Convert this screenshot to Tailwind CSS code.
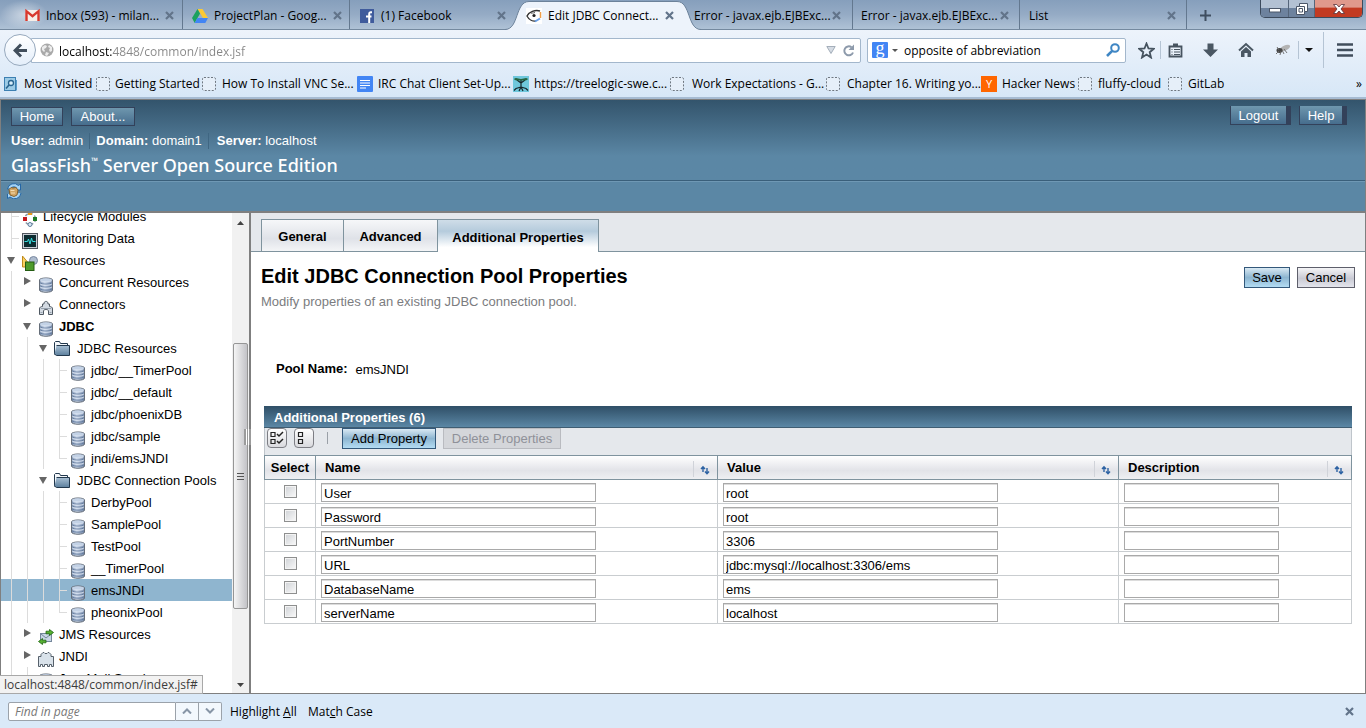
<!DOCTYPE html>
<html lang="en">
<head>
<meta charset="utf-8">
<title>Edit JDBC Connection Pool Properties</title>
<script src="https://cdn.jsdelivr.net/npm/@tailwindcss/browser@4"></script>
</head>
<body class="h-screen flex flex-col overflow-hidden bg-[#dae9f8] text-black font-['Open_Sans','Noto_Sans',sans-serif] text-[12px] leading-4">

<svg class="absolute size-0" aria-hidden="true">
  <defs>
    <linearGradient id="disk" x1="0" x2="1" y1="0" y2="0"><stop offset="0" stop-color="#7f93b1"/><stop offset=".4" stop-color="#cbd8ea"/><stop offset="1" stop-color="#7488a8"/></linearGradient>
    <linearGradient id="fold" x1="0" x2="0" y1="0" y2="1"><stop offset="0" stop-color="#a9c0d4"/><stop offset="1" stop-color="#5c7f9d"/></linearGradient>
    <symbol id="x" viewBox="0 0 9 9"><path d="M1 1l7 7M8 1l-7 7" stroke="#62748a" stroke-width="2.2"/></symbol>
    <symbol id="blank" viewBox="0 0 14 14"><rect x=".5" y=".5" width="13" height="13" rx="1.5" fill="#e6eff9" stroke="#6f7780" stroke-dasharray="2 1.5"/></symbol>
    <symbol id="db" viewBox="0 0 16 16"><path d="M1.500 3C1.500 .3 14.500 .3 14.500 3V13c0 3-13 3-13 0z" fill="url(#disk)" stroke="#666e79"/><ellipse cx="8" cy="3" rx="6" ry="1.700" fill="#c3d2e6"/><path d="M2 5.800c1 1.800 11 1.800 12 0M2 8.800c1 1.800 11 1.800 12 0M2 11.800c1 1.800 11 1.800 12 0" fill="none" stroke="#5f779b" stroke-width=".9"/><path d="M2 6.800c1 1.800 11 1.800 12 0M2 9.800c1 1.800 11 1.800 12 0M2.500 4c2 1.200 9 1.200 11 0" fill="none" stroke="#dfe9f5" stroke-width=".8"/></symbol>
    <symbol id="folder" viewBox="0 0 16 16"><path d="M.5 14.500V2.500l1-1h4l1 2h7v2" fill="#f4f7fa" stroke="#22384d"/><path d="M2.500 5.500h13v10h-13l-2-1.500" fill="url(#fold)" stroke="#22384d"/></symbol>
    <symbol id="life" viewBox="0 0 16 16"><circle cx="8" cy="8" r="5.500" fill="none" stroke="#8c9aa8" stroke-width="1.500" stroke-dasharray="3 2"/><rect x="1" y="6" width="4" height="4" fill="#c4171e"/><rect x="11" y="6" width="4" height="4" fill="#1d7a27"/><circle cx="8" cy="13.500" r="2" fill="#d8e7f5" stroke="#5e7d9b"/><rect x="6" y="1" width="4" height="3" fill="#e79a1b"/></symbol>
    <symbol id="mon" viewBox="0 0 16 16"><rect x=".5" y=".5" width="15" height="15" fill="#c9ced6" stroke="#50565e"/><rect x="2" y="2" width="12" height="12" fill="#0c2c31"/><path d="M2.500 8.500h3L6.500 6 8 11l1.500-6 1 3.500h3" fill="none" stroke="#35dfe0"/></symbol>
    <symbol id="res" viewBox="0 0 16 16"><path d="M.5 1v11h5V7z" fill="#f9d163" stroke="#c08b1c"/><circle cx="11.500" cy="5.500" r="4" fill="#aebccf" stroke="#7888a0"/><rect x="3.500" y="7" width="8.500" height="8.500" fill="#4e9b2b" stroke="#245c12"/></symbol>
    <symbol id="conn" viewBox="0 0 16 16"><path d="M1.500 15.500v-5.500c0-2 1.500-2.500 3-2.500V5h1.500c-.5-3.500 4.500-3.500 4 0h1.500v2.500c1.500 0 3 .5 3 2.500v5.500h-4v-3.500c0-2-5-2-5 0v3.500z" fill="#d3dae2" stroke="#4f5862"/><path d="M3 9.500h10M2.500 13.500h2M11.500 13.500h2" fill="none" stroke="#98a3af"/></symbol>
    <symbol id="jms" viewBox="0 0 16 16"><rect x="2.500" y="4.500" width="11" height="8" fill="#c8d6e6" stroke="#75879b"/><path d="M3 5l5 4 5-4" fill="none" stroke="#75879b"/><path d="M8 2.200h3.500V.5L15.500 3.500l-4 3V4.800H8zM8 11.200H4.500V9.500L.5 12.500l4 3v-1.700H8z" fill="#55b031" stroke="#1f6412" stroke-width=".8"/></symbol>
    <symbol id="jndi" viewBox="0 0 16 16"><path d="M.5 15.500v-10h2.500v-2l2-2h1l1 1h2l1-1h1l2 2v2h2.500v10h-2v-2h-2v2h-2v-2h-3v2h-2v-2h-2v2z" fill="#d9e2ea" stroke="#56606b"/></symbol>
    <symbol id="sort" viewBox="0 0 10 10"><path d="M3 7V2M1 4l2-2.300L5 4M7 3v5M5 6.500l2 2.300 2-2.300" fill="none" stroke="#2d62a3" stroke-width="1.400"/></symbol>
  </defs>
</svg>

<!-- Window tab strip -->
<header class="relative h-[30px] shrink-0 flex border-b border-[#74899f] bg-linear-to-b from-[#869fbc] via-[#95abc5] to-[#afc2d6] pl-4">
  <div class="absolute left-0 top-0 h-[29px] w-12 bg-radial from-white/50 to-transparent to-70%"></div>
  <nav class="flex h-[29px] relative" aria-label="Tabs">
    <div class="w-[167px] flex items-center gap-[6px] pl-[9px] pr-[13px] pt-[2px] border-r border-[#63788f]">
      <svg class="size-[15px] shrink-0" viewBox="0 0 15 15"><rect x=".5" y="2" width="14" height="11" fill="#f6eee8"/><path d="M1.500 13V3.200l6 5 6-5V13" fill="none" stroke="#d8382d" stroke-width="2.400"/></svg>
      <span class="grow whitespace-nowrap">Inbox (593) - milan...</span>
      <button aria-label="Close tab"><svg class="size-[9px]"><use href="#x"/></svg></button>
    </div>
    <div class="w-[167px] flex items-center gap-[6px] pl-[9px] pr-[11px] pt-[2px] border-r border-[#63788f]">
      <svg class="size-4 shrink-0" viewBox="0 0 16 16"><path d="M5.500 1h5L16 10h-5z" fill="#fcc934"/><path d="M5.500 1L8 5.500 2.700 15 0 10z" fill="#1aa15f"/><path d="M5.300 10H16l-2.700 5H2.700z" fill="#4285f4"/></svg>
      <span class="grow whitespace-nowrap">ProjectPlan - Goog...</span>
      <button aria-label="Close tab"><svg class="size-[9px]"><use href="#x"/></svg></button>
    </div>
    <div class="w-[167px] flex items-center gap-[7px] pl-[10px] pr-[11px] pt-[2px]">
      <svg class="size-[14px] shrink-0" viewBox="0 0 14 14"><path fill="#3f5b9c" d="M0 0h14v14H0z"/><path d="M12 3.200H10.500c-1 0-1.300.5-1.300 1.500V14M6 7.500h5.500" stroke="#fff" stroke-width="2" fill="none"/></svg>
      <span class="grow whitespace-nowrap">(1) Facebook</span>
      <button aria-label="Close tab"><svg class="size-[9px]"><use href="#x"/></svg></button>
    </div>
    <div class="relative w-[167px] flex items-center gap-[6px] pl-[9px] pr-[10px] pt-[2px]">
      <svg class="absolute -left-[12px] top-[1px] h-[29px] w-[196px]" viewBox="0 0 196 29"><path d="M0 28.500C14 28.500 10 .5 24 .5H172C186 .5 182 28.500 196 28.500V30H0z" fill="#edf3fb" stroke="#6c829a"/></svg>
      <svg class="relative size-4 shrink-0" viewBox="0 0 16 16"><path fill="#fff" d="M0 0h16v16H0z"/><path d="M14 3C9 1.500 3 4 1 8c2 4 6 5.500 9 5" fill="none" stroke="#333" stroke-width="1.400"/><path d="M5 5.500c1-1 2 0 4-1" stroke="#555" fill="none"/><circle cx="8" cy="7.500" r="1.600" fill="#222"/><path d="M14.500 4v6" stroke="#f0a04b" stroke-width="1.500"/><path d="M9 13.500l5-3" stroke="#69a0e8" stroke-width="2"/></svg>
      <span class="relative grow whitespace-nowrap">Edit JDBC Connect...</span>
      <button class="relative" aria-label="Close tab"><svg class="size-[9px]"><use href="#x"/></svg></button>
    </div>
    <div class="w-[169px] flex items-center pl-[10px] pr-[11px] pt-[2px] border-r border-[#63788f]">
      <span class="grow whitespace-nowrap">Error - javax.ejb.EJBExc...</span>
      <button aria-label="Close tab"><svg class="size-[9px]"><use href="#x"/></svg></button>
    </div>
    <div class="w-[167px] flex items-center pl-2 pr-[10px] pt-[2px] border-r border-[#63788f]">
      <span class="grow whitespace-nowrap">Error - javax.ejb.EJBExc...</span>
      <button aria-label="Close tab"><svg class="size-[9px]"><use href="#x"/></svg></button>
    </div>
    <div class="w-[167px] flex items-center pl-[9px] pr-[10px] pt-[2px] border-r border-[#63788f]">
      <span class="grow whitespace-nowrap">List</span>
      <button aria-label="Close tab"><svg class="size-[9px]"><use href="#x"/></svg></button>
    </div>
    <button class="w-9 flex items-center justify-center pt-[2px]" aria-label="New tab"><svg class="size-[11px]" viewBox="0 0 11 11"><path d="M5.500 0v11M0 5.500h11" stroke="#3f4e60" stroke-width="2"/></svg></button>
  </nav>
  <div class="ml-auto mr-[3px] flex h-[18px] rounded-b-[5px] border border-t-0 border-[#3c4a5c] overflow-hidden">
    <button class="w-7 flex justify-center items-end pb-1 border-r border-[#55657a] bg-linear-to-b from-[#b3c1d3] from-45% to-[#6d829e] to-50%" aria-label="Minimize"><svg class="h-[5px] w-3" viewBox="0 0 12 5"><rect x=".5" y=".5" width="11" height="3.500" fill="#fff" stroke="#4b5668"/></svg></button>
    <button class="w-[26px] flex justify-center items-center border-r border-[#55657a] bg-linear-to-b from-[#b3c1d3] from-45% to-[#6d829e] to-50%" aria-label="Restore"><svg class="size-3" viewBox="0 0 12 12"><path d="M3.500.5h8v8h-3v3h-8v-8h3z" fill="#fff" stroke="#4b5668"/><path d="M3.500 3.500h5v5M3 5.500h3.500V9H3z" fill="none" stroke="#4b5668"/></svg></button>
    <button class="w-[47px] flex justify-center items-center bg-linear-to-b from-[#e0998c] from-40% to-[#c23a22] to-50%" aria-label="Close"><svg class="h-[10px] w-3" viewBox="0 0 12 10"><path d="M.5.5h3.300L6 3l2.200-2.500h3.300L8 5l3.500 4.500H8.200L6 7 3.800 9.500H.5L4 5z" fill="#fff" stroke="#573038" stroke-width=".8"/></svg></button>
  </div>
</header>

<!-- Navigation and bookmarks -->
<div class="shrink-0 h-[69px] bg-linear-to-b from-[#edf3fb] to-[#d7e7f7] border-b-2 border-b-[#a6bbd2] flex flex-col">
  <div class="flex items-center h-10 pl-1">
    <button class="relative z-10 size-8 shrink-0 rounded-full border border-[#97a9bd] bg-linear-to-b from-white to-[#e4eefa] flex items-center justify-center" aria-label="Back"><svg class="h-[15px] w-[14px]" viewBox="0 0 14 15"><path d="M8 1.500L2 7.500l6 6M2.500 7.500H14" fill="none" stroke="#414e5c" stroke-width="3"/></svg></button>
    <div class="-ml-[5px] grow h-[25px] bg-white border border-[#a3b7cc] rounded-r-[2px] flex items-center pl-2 pr-[5px]">
      <svg class="size-[14px] shrink-0" viewBox="0 0 14 14"><circle cx="7" cy="7" r="6.500" fill="#a9a9a9"/><path d="M2 4l3-2 2 1-1 2-2 1 1 2-1 1-2-2zM9 2l3 2v4l-2 1-1-2 1-2-2-1zM6 9l3 1-2 3-2-1z" fill="#ececec"/></svg>
      <input aria-label="Address" value="localhost:4848/common/index.jsf" class="ml-[5px] h-[22px] grow min-w-0 pt-[2px] outline-none bg-clip-text text-transparent bg-linear-to-r from-black from-[53px] to-[#868686] to-[53px]">
      <button aria-label="History"><svg class="h-2 w-[10px]" viewBox="0 0 10 8"><path d="M.8.5h8.400L5 7.500z" fill="#d6dce4" stroke="#a4aeba"/></svg></button>
      <button class="ml-[6px]" aria-label="Reload"><svg class="size-[13px]" viewBox="0 0 13 13"><path d="M9.500 3.200A4.500 4.500 0 1 0 11 8.500" fill="none" stroke="#8d9aab" stroke-width="2"/><path d="M12 .5V6H6.500z" fill="#8d9aab"/></svg></button>
    </div>
    <div class="ml-[6px] w-[259px] h-[25px] bg-white border border-[#a3b7cc] rounded-[2px] flex items-center pl-1 pr-[5px]">
      <span class="size-4 shrink-0 rounded-[1px] bg-[#4285f4] text-white flex justify-center text-[18px] leading-[12px] font-['Liberation_Serif',serif]">g</span>
      <svg class="ml-1 h-[3px] w-[6px] shrink-0" viewBox="0 0 6 3"><path d="M0 0h6L3 3z" fill="#555"/></svg>
      <input class="ml-[6px] grow min-w-0 pt-[2px] outline-none" aria-label="Search" value="opposite of abbreviation">
      <button aria-label="Go"><svg class="size-[14px]" viewBox="0 0 14 14"><circle cx="9" cy="5" r="3.800" fill="none" stroke="#3f86c4" stroke-width="2"/><path d="M6.200 7.800L1 13" stroke="#3f86c4" stroke-width="2.600"/></svg></button>
    </div>
    <button class="ml-3 shrink-0" aria-label="Bookmark"><svg class="size-[17px]" viewBox="0 0 17 17"><path d="M8.500 1.500l2 5 5.200.3-4 3.400 1.300 5.300-4.500-3-4.500 3 1.300-5.300-4-3.400 5.200-.3z" fill="none" stroke="#46535f" stroke-width="1.800"/></svg></button>
    <span class="ml-[5px] w-px h-[18px] bg-[#b5c4d4]"></span>
    <button class="ml-[7px] shrink-0" aria-label="Bookmarks list"><svg class="size-[15px]" viewBox="0 0 15 15"><path d="M1.500 3.500h12v10h-12z" fill="#e9f1fa" stroke="#46535f" stroke-width="1.800"/><path d="M5 .5h5v3H5z" fill="#46535f"/><path d="M3.500 6.500h1M6 6.500h6M3.500 9h1M6 9h6M3.500 11.500h1M6 11.500h6" stroke="#46535f"/></svg></button>
    <button class="ml-5 shrink-0" aria-label="Downloads"><svg class="size-[15px]" viewBox="0 0 15 15"><path d="M4.500.5h6v6H15L7.500 14 0 6.500h4.500z" fill="#4a5763"/></svg></button>
    <button class="ml-5 shrink-0" aria-label="Home page"><svg class="size-4" viewBox="0 0 16 16"><path d="M1 8.500L8 2l7 6.500" fill="none" stroke="#4a5763" stroke-width="2"/><path d="M3 9.500l5-4.500 5 4.500V15H9.500v-4h-3v4H3z" fill="#4a5763"/></svg></button>
    <button class="ml-[21px] shrink-0" aria-label="Firebug"><svg class="size-4" viewBox="0 0 16 16"><ellipse cx="10" cy="6" rx="5.500" ry="2.600" fill="#b3b3b3" transform="rotate(-25 10 6)"/><ellipse cx="4.500" cy="8.500" rx="3" ry="2.400" fill="#444"/><path d="M1 12l3-3M5 13l1-4M9 12L7 8M12 11l-3-4M2 5l2 3" stroke="#666" stroke-width=".9"/></svg></button>
    <span class="ml-[7px] w-px h-[18px] bg-[#b5c4d4]"></span>
    <button class="ml-[6px] shrink-0" aria-label="More"><svg class="h-1 w-2" viewBox="0 0 8 4"><path d="M0 0h8L4 4z" fill="#111"/></svg></button>
    <span class="ml-[10px] w-px h-9 bg-[#b5c4d4]"></span>
    <button class="ml-[13px] mr-[13px] shrink-0" aria-label="Menu"><svg class="h-[14px] w-4" viewBox="0 0 16 14"><path d="M0 1.500h16M0 7h16M0 12.500h16" stroke="#414e5c" stroke-width="2.600"/></svg></button>
  </div>
  <nav class="flex items-center h-[27px] pl-1 pt-px whitespace-nowrap" aria-label="Bookmarks">
    <a href="#" class="w-[92px] flex items-center gap-[6px]"><svg class="size-[14px] shrink-0" viewBox="0 0 14 14"><rect x=".5" y=".5" width="11" height="13" fill="#9ccbe6" stroke="#3d80b2"/><path d="M12.500 3v10.500" stroke="#5c9cc8"/><circle cx="7" cy="6" r="2.500" fill="#d9eefa" stroke="#28648f" stroke-width="1.300"/><path d="M5 8l-3 3.500" stroke="#28648f" stroke-width="1.600"/></svg>Most Visited</a>
    <a href="#" class="w-[106px] flex items-center gap-[5px]"><svg class="size-[14px] shrink-0"><use href="#blank"/></svg>Getting Started</a>
    <a href="#" class="w-[155px] flex items-center gap-[6px]"><svg class="size-[14px] shrink-0"><use href="#blank"/></svg>How To Install VNC Se...</a>
    <a href="#" class="w-[156px] flex items-center gap-[5px]"><svg class="size-4 shrink-0" viewBox="0 0 16 16"><rect width="16" height="16" rx="1" fill="#4285f4"/><path d="M3 4.500h10M3 7h10M3 9.500h10M3 12h6" stroke="#fff" stroke-width="1.200"/></svg>IRC Chat Client Set-Up...</a>
    <a href="#" class="w-[157px] flex items-center gap-[5px]"><svg class="size-4 shrink-0" viewBox="0 0 16 16"><path fill="#6fc7dc" d="M0 0h16v16H0z"/><path d="M8 4v8M8 11l-5 1.500-2 2M8 11l5 1.500 2 2M8 11l-2 4M8 11l2 4M8 7L4 4M8 7l4-3" fill="none" stroke="#17262b" stroke-width="1.200"/><path d="M1 3c2-2 4 0 7 0s5-2 7 0c-1 2-4 1.500-7 1.500S2 5 1 3z" fill="#27653f"/></svg>https://treelogic-swe.c...</a>
    <a href="#" class="w-[156px] flex items-center gap-2"><svg class="size-[14px] shrink-0"><use href="#blank"/></svg>Work Expectations - G...</a>
    <a href="#" class="w-[155px] flex items-center gap-[7px]"><svg class="size-[14px] shrink-0"><use href="#blank"/></svg>Chapter 16. Writing yo...</a>
    <a href="#" class="w-[97px] flex items-center gap-[5px]"><span class="size-4 shrink-0 bg-[#ff6600] text-white text-center text-[11px]">Y</span>Hacker News</a>
    <a href="#" class="w-[90px] flex items-center gap-[6px]"><svg class="size-[14px] shrink-0"><use href="#blank"/></svg>fluffy-cloud</a>
    <a href="#" class="flex items-center gap-[6px]"><svg class="size-[14px] shrink-0"><use href="#blank"/></svg>GitLab</a>
    <button class="ml-auto mr-1" aria-label="More bookmarks">»</button>
  </nav>
</div>

<!-- GlassFish console -->
<div class="grow min-h-0 flex flex-col border border-[#7f7f7f] bg-white font-['Liberation_Sans',Arial,sans-serif] text-[13px]">
  <header class="shrink-0 border-b-2 border-[#7f7f7f] bg-[#5b87a5] text-white">
    <div class="h-[81px] bg-linear-to-b from-[#33546c] to-[#5b87a5] to-70% border-b border-[#3a5f7a] pl-[10px] pr-[18px] pt-[6px]">
      <div class="flex items-start">
        <button class="h-[19px] w-[52px] mt-px border border-[#33415a] bg-linear-to-b from-[#6f97ae] to-[#466d8d]">Home</button>
        <button class="ml-2 h-[19px] w-16 mt-px border border-[#33415a] bg-linear-to-b from-[#6f97ae] to-[#466d8d]">About...</button>
        <button class="ml-auto h-[19px] w-[61px] pt-px border-l border-b border-r-[5px] border-[#33415a] bg-linear-to-b from-[#6f97ae] to-[#466d8d]">Logout</button>
        <button class="ml-2 h-[19px] w-12 pt-px border-l border-b border-r-[5px] border-[#33415a] bg-linear-to-b from-[#6f97ae] to-[#466d8d]">Help</button>
      </div>
      <dl class="mt-[7px] flex items-center">
        <div class="pr-[6px] border-r border-[#3f6682]"><dt class="inline font-bold">User:</dt> <dd class="inline">admin</dd></div>
        <div class="px-[6px] border-r border-[#3f6682]"><dt class="inline font-bold">Domain:</dt> <dd class="inline">domain1</dd></div>
        <div class="pl-2"><dt class="inline font-bold">Server:</dt> <dd class="inline">localhost</dd></div>
      </dl>
      <h1 class="mt-1 font-['Noto_Sans','Open_Sans',sans-serif] text-[18px] leading-6 font-medium">GlassFish<sup class="text-[9px] -top-2">™</sup> Server Open Source Edition</h1>
    </div>
    <div class="h-[30px] border-t border-[#6f98b4] pl-[5px] pt-px">
      <button aria-label="Refresh tree"><svg class="size-4" viewBox="0 0 16 16"><path d="M1.500 6a6.500 6.500 0 0 1 11-3.500L14.500 1v6H9l1.800-2A4.500 4.500 0 0 0 4 6zM15 10a6.500 6.500 0 0 1-11 4l-2.500 1.500V11" fill="#a5d4f5" stroke="#2466a5"/><path d="M3 6.500L5 4.500l2 .5 3-.5 2 2.500-1 5-3 1.500-4-1.500z" fill="#d3a765" stroke="#86622f"/><path d="M4.500 7.500h4M5 10h4" stroke="#f3dcb2"/></svg></button>
    </div>
  </header>

  <div class="grow min-h-0 flex">
    <nav class="w-[231px] shrink-0 overflow-hidden" aria-label="Tree"><ul id="tree" class="-mt-2"></ul></nav>

    <!-- Tree scrollbar -->
    <div class="relative w-[17px] shrink-0 bg-[#f1f1f1] flex flex-col items-center">
      <svg class="mt-2 h-1 w-[7px]" viewBox="0 0 7 4"><path d="M0 4h7L3.500 0z" fill="#444"/></svg>
      <div class="mt-[118px] h-[266px] w-[15px] shrink-0 rounded-[2px] border border-[#969696] bg-linear-to-r from-[#f5f5f5] to-[#c3c3c7] flex flex-col gap-[2px] items-center justify-center">
        <span class="w-[7px] h-px bg-[#555]"></span><span class="w-[7px] h-px bg-[#555]"></span><span class="w-[7px] h-px bg-[#555]"></span>
      </div>
      <svg class="mt-auto mb-[6px] h-1 w-[7px]" viewBox="0 0 7 4"><path d="M0 0h7L3.500 4z" fill="#444"/></svg>
      <div class="absolute left-3 top-[216px] flex h-4 gap-px border-x border-[#9b9b9b] px-px bg-[#9b9b9b]"><span class="w-px bg-white"></span><span class="w-px bg-white"></span></div>
    </div>
    <div class="w-[2px] shrink-0 bg-[#7f7f7f]"></div>

    <main class="grow min-w-0">
      <div class="h-[39px] flex items-end bg-[#e5e8ec] border-b border-[#7f939e] pl-[10px]" role="tablist">
        <button role="tab" class="h-8 w-[83px] pt-[2px] border border-b-0 border-[#7f939e] bg-linear-to-b from-[#f6f7f9] via-[#dfe2e8] via-60% to-[#f4f5f7] font-bold">General</button>
        <button role="tab" class="h-8 w-[93px] pt-[2px] border-t border-[#7f939e] bg-linear-to-b from-[#f6f7f9] via-[#dfe2e8] via-60% to-[#f4f5f7] font-bold">Advanced</button>
        <button role="tab" aria-selected="true" class="-mb-px h-[33px] w-[162px] border border-b-0 border-[#7f939e] bg-linear-to-b from-[#cfdde8] via-[#b5cbdc] via-35% to-white to-85% font-bold pt-1">Additional Properties</button>
      </div>
      <div class="pl-[10px] pr-[10px] pt-3">
        <div class="flex items-start">
          <h2 class="grow text-[20px] leading-6 font-bold">Edit JDBC Connection Pool Properties</h2>
          <button class="mt-[3px] h-[21px] w-[46px] border border-[#33587a] bg-linear-to-b from-[#d9e9f3] via-[#8db5d0] via-50% to-[#b3dcf3]">Save</button>
          <button class="ml-[7px] mt-[3px] h-[21px] w-[58px] border border-[#5e5f6b] bg-linear-to-b from-[#f4f4f6] via-[#c9cad4] via-55% to-[#e4e5ec]">Cancel</button>
        </div>
        <p class="mt-[6px] text-[#7b7c80]">Modify properties of an existing JDBC connection pool.</p>
        <dl class="mt-[51px] pl-[15px] flex gap-2"><dt class="font-bold">Pool Name:</dt><dd class="pt-px">emsJNDI</dd></dl>
      </div>

      <section class="mt-7 ml-[13px] mr-[13px]">
        <h3 class="h-[22px] pl-[10px] text-white font-bold leading-6 bg-linear-to-b from-[#2f4f67] to-[#5b87a5] border-b border-[#3f5d72]">Additional Properties (6)</h3>
        <div class="h-[27px] flex items-start bg-[#e5e8ec] border-x border-[#bfc5cb] pl-[2px]">
          <button class="size-5 flex items-center justify-center rounded-[4px] border border-[#7d7e84] bg-linear-to-b from-white to-[#d9dade]" aria-label="Select all"><svg class="size-[14px]" viewBox="0 0 14 14"><path d="M1 1.500h4v4H1zM1 8.500h4v4H1z" fill="none" stroke="#222" stroke-width="1.200"/><path d="M7 3l2 2 4-4M7 10l2 2 4-4" fill="none" stroke="#222" stroke-width="1.500"/></svg></button>
          <button class="ml-[7px] size-5 flex items-center justify-center rounded-[4px] border border-[#7d7e84] bg-linear-to-b from-white to-[#d9dade]" aria-label="Deselect all"><svg class="size-[14px]" viewBox="0 0 14 14"><path d="M1.500 1.500h4v4h-4zM1.500 8.500h4v4h-4z" fill="none" stroke="#222" stroke-width="1.200"/></svg></button>
          <span class="ml-[13px] mt-1 mr-[14px] w-px h-3 bg-[#9aa0a7]"></span>
          <button class="h-[21px] w-[94px] border border-[#33587a] bg-linear-to-b from-[#d9e9f3] via-[#8db5d0] via-50% to-[#b3dcf3]">Add Property</button>
          <button disabled class="ml-[7px] h-[21px] w-[118px] border border-[#b9bbc0] bg-[#d4d6da] text-[#8f9199]">Delete Properties</button>
        </div>
        <table class="w-full table-fixed border-collapse">
          <colgroup><col class="w-[51px]"><col class="w-[402px]"><col class="w-[401px]"><col></colgroup>
          <thead>
            <tr class="h-6 bg-linear-to-b from-white via-[#e2e3e8] via-60% to-[#f0f1f3]">
              <th class="border border-[#7f939e] p-0 pt-px text-center">Select</th>
              <th class="border border-[#7f939e] p-0 pl-[9px] pt-px"><div class="flex"><span class="grow text-left">Name</span><a href="#" class="mt-px h-4 w-6 pl-[6px] pt-1 border-l border-[#d0d3d9]" aria-label="Sort by name"><svg class="size-[10px]"><use href="#sort"/></svg></a></div></th>
              <th class="border border-[#7f939e] p-0 pl-[9px] pt-px"><div class="flex"><span class="grow text-left">Value</span><a href="#" class="mt-px h-4 w-6 pl-[6px] pt-1 border-l border-[#d0d3d9]" aria-label="Sort by value"><svg class="size-[10px]"><use href="#sort"/></svg></a></div></th>
              <th class="border border-[#7f939e] p-0 pl-[9px] pt-px"><div class="flex"><span class="grow text-left">Description</span><a href="#" class="mt-px h-4 w-6 pl-[6px] pt-1 border-l border-[#d0d3d9]" aria-label="Sort by description"><svg class="size-[10px]"><use href="#sort"/></svg></a></div></th>
            </tr>
          </thead>
          <tbody id="rows"></tbody>
        </table>
      </section>
    </main>
  </div>
</div>

<!-- Find bar -->
<footer class="relative shrink-0 h-[34px] bg-[#dae9f8] flex items-center pl-2 pr-3">
  <div class="absolute left-0 bottom-full h-[19px] px-1 leading-[18px] bg-[#f2f2f2] border border-l-0 border-[#a8a8a8] text-[#3c3c3c]">localhost:4848/common/index.jsf#</div>
  <input placeholder="Find in page" aria-label="Find in page" class="w-[168px] h-[19px] pl-[6px] bg-white border border-[#9ba2aa] rounded-l-[2px] italic placeholder:text-[#777]">
  <button class="h-[19px] w-[23px] border border-l-0 border-[#9ba2aa] bg-[#f3f8fd] flex items-center justify-center" aria-label="Previous"><svg class="h-[6px] w-[10px]" viewBox="0 0 10 6"><path d="M1 5.500l4-4 4 4" fill="none" stroke="#8795a6" stroke-width="2"/></svg></button>
  <button class="h-[19px] w-[23px] border border-l-0 border-[#9ba2aa] bg-[#f3f8fd] rounded-r-[2px] flex items-center justify-center" aria-label="Next"><svg class="h-[6px] w-[10px]" viewBox="0 0 10 6"><path d="M1 .5l4 4 4-4" fill="none" stroke="#8795a6" stroke-width="2"/></svg></button>
  <button class="ml-2 w-[67px] pt-[2px] text-left whitespace-nowrap">Highlight <u>A</u>ll</button>
  <button class="ml-[11px] pt-[2px] whitespace-nowrap">Mat<u>c</u>h Case</button>
  <button class="ml-auto" aria-label="Close find bar"><svg class="size-[9px]"><use href="#x"/></svg></button>
</footer>

<script>
  // guides: l = line, o = open arrow, c = closed arrow, t = branch, e = last branch
  const tree = [
    ['t', 'life', 'Lifecycle Modules'], ['t', 'mon', 'Monitoring Data'], ['o', 'res', 'Resources'],
    ['lc', 'db', 'Concurrent Resources'], ['lc', 'conn', 'Connectors'], ['lo', 'db', 'JDBC', 'bold'],
    ['llo', 'folder', 'JDBC Resources'],
    ['lllt', 'db', 'jdbc/__TimerPool'], ['lllt', 'db', 'jdbc/__default'], ['lllt', 'db', 'jdbc/phoenixDB'],
    ['lllt', 'db', 'jdbc/sample'], ['llle', 'db', 'jndi/emsJNDI'],
    ['llo', 'folder', 'JDBC Connection Pools'],
    ['lllt', 'db', 'DerbyPool'], ['lllt', 'db', 'SamplePool'], ['lllt', 'db', 'TestPool'],
    ['lllt', 'db', '__TimerPool'], ['lllt', 'db', 'emsJNDI', 'on'], ['llle', 'db', 'pheonixPool'],
    ['lc', 'jms', 'JMS Resources'], ['lc', 'jndi', 'JNDI'], ['lt', 'db', 'JavaMail Sessions']
  ];
  const cell = {
    l: '<span class="w-4 flex justify-center"><i class="w-px bg-[#dcdcdc]"></i></span>',
    o: '<span class="w-4 flex justify-center items-center pt-px"><svg class="h-[7px] w-2" viewBox="0 0 8 7"><path d="M0 0h8L4 7z" fill="#666"/></svg></span>',
    c: '<span class="w-4 flex justify-center items-center pb-[2px]"><svg class="h-2 w-[7px]" viewBox="0 0 7 8"><path d="M0 0l7 4-7 4z" fill="#666"/></svg></span>',
    t: '<span class="w-4 pl-2 flex items-center"><i class="h-full w-px bg-[#dcdcdc]"></i><i class="h-px grow bg-[#dcdcdc]"></i></span>',
    e: '<span class="w-4 pl-2 flex items-start"><i class="h-3 grow border-l border-b border-[#dcdcdc]"></i></span>'
  };
  document.getElementById('tree').innerHTML = tree.map(([g, icon, text, mode]) =>
    `<li class="${mode === 'on' ? 'bg-[#8fb5cf]' : ''}"><a href="#" class="h-[22px] flex pl-[2px] whitespace-nowrap">${[...g].map(k => cell[k]).join('')}` +
    (icon === 'folder'
      ? '<span class="w-[26px] flex items-end justify-start pl-[3px] pb-[3px]"><svg class="size-4"><use href="#folder"/></svg></span>'
      : `<span class="w-6 flex items-end justify-start pl-[3px]"><svg class="size-4"><use href="#${icon}"/></svg></span>`) +
    `<span class="leading-6 ${mode === 'bold' ? 'font-bold' : ''}">${text}</span></a></li>`).join('');

  const rows = [['User', 'root'], ['Password', 'root'], ['PortNumber', '3306'], ['URL', 'jdbc:mysql://localhost:3306/ems'], ['DatabaseName', 'ems'], ['serverName', 'localhost']];
  const box = (w, v, label) => `<td class="border border-[#c9cdd0] p-0 pl-[5px] pt-px"><input aria-label="${label}" value="${v}" class="block h-[19px] ${w} border border-[#a9a9a9] px-[2px] pt-[2px] shadow-[inset_0_1px_0_#dcdcdc] bg-white"></td>`;
  document.getElementById('rows').innerHTML = rows.map(([n, v]) =>
    `<tr class="h-6"><td class="border border-[#c9cdd0] p-0"><input type="checkbox" aria-label="Select ${n}" class="block mx-auto size-[13px] appearance-none border border-[#8e8f8f] bg-linear-to-br from-[#cfd2d6] to-[#fafafa] shadow-[inset_0_0_0_1px_#f4f4f4]"></td>` +
    box('w-[275px]', n, 'Name') + box('w-[275px]', v, 'Value') + box('w-[155px]', '', 'Description') + '</tr>').join('');
</script>
</body>
</html>
